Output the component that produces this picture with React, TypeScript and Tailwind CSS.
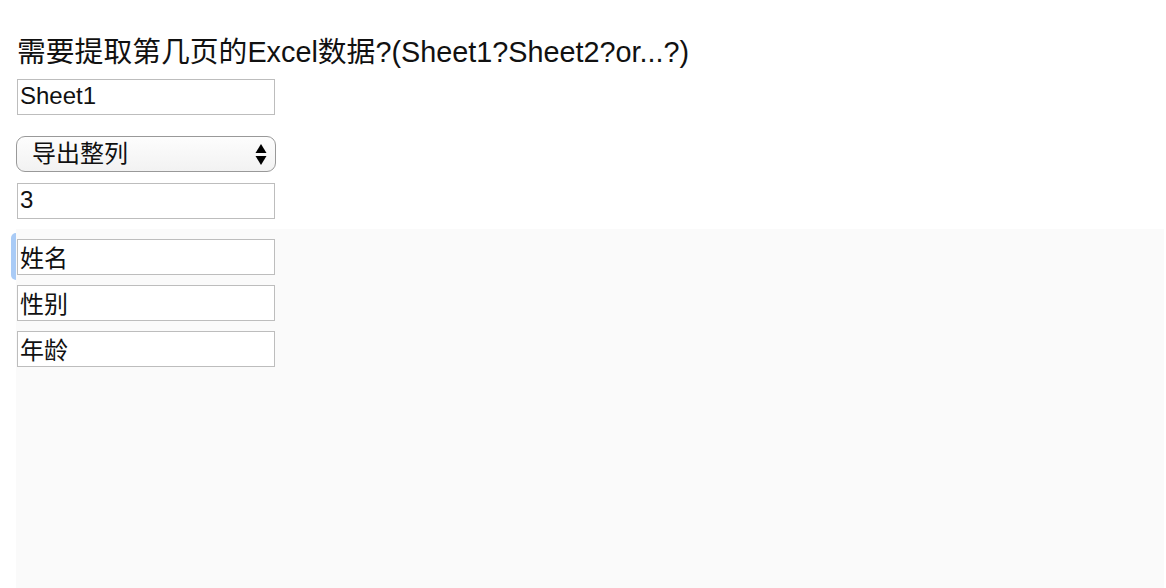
const font = "font-['Liberation_Sans','Noto_Sans_CJK_SC',sans-serif]"

function TextBox({ value, focused }: { value: string; focused?: boolean }) {
  return (
    <div className="relative ml-px w-[258px] h-[36px]">
      {focused && (
        <span className="absolute -left-[6px] -top-[6px] w-[5px] h-[47px] rounded-l-[5px] bg-[#a9cbf6]" />
      )}
      <input
        readOnly
        value={value}
        className={`${font} block w-full h-full border border-[#bdbdbd] bg-white px-[2px] pt-0 pb-[2px] text-[24px] text-[#111] outline-none`}
      />
    </div>
  )
}

function FakeSelect({ label }: { label: string }) {
  return (
    <div className="flex items-center justify-between w-[260px] h-[36px] rounded-[9px] border-[1.5px] border-[#999] bg-gradient-to-b from-[#fdfdfd] to-[#f2f2f2] pl-[15px] pr-[8px]">
      <span className={`${font} text-[24px] leading-none text-[#111]`}>{label}</span>
      <svg width="12" height="23" viewBox="0 0 12 23" className="text-black">
        <path d="M6 1 L11.5 10 L0.5 10 Z" fill="currentColor" />
        <path d="M0.5 13 L11.5 13 L6 22 Z" fill="currentColor" />
      </svg>
    </div>
  )
}

export default function App() {
  const columns = ["姓名", "性别", "年龄"]

  return (
    <div className={`${font} w-[1166px] h-[588px] overflow-hidden bg-white pl-[16px] pt-[38px] flex flex-col text-[#111]`}>
      <h3 className="ml-px h-[29px] text-[28.8px] leading-[29px] font-normal whitespace-nowrap">
        需要提取第几页的Excel数据?(Sheet1?Sheet2?or...?)
      </h3>

      <div className="mt-[12px]">
        <TextBox value="Sheet1" />
      </div>

      <div className="mt-[21px]">
        <FakeSelect label="导出整列" />
      </div>

      <div className="mt-[11px]">
        <TextBox value="3" />
      </div>

      <div className="mt-[10px] flex-1 w-[1148px] bg-[#fafafa] pt-[10px] flex flex-col gap-[10px]">
        {columns.map((c, i) => (
          <TextBox key={c} value={c} focused={i === 0} />
        ))}
      </div>
    </div>
  )
}
